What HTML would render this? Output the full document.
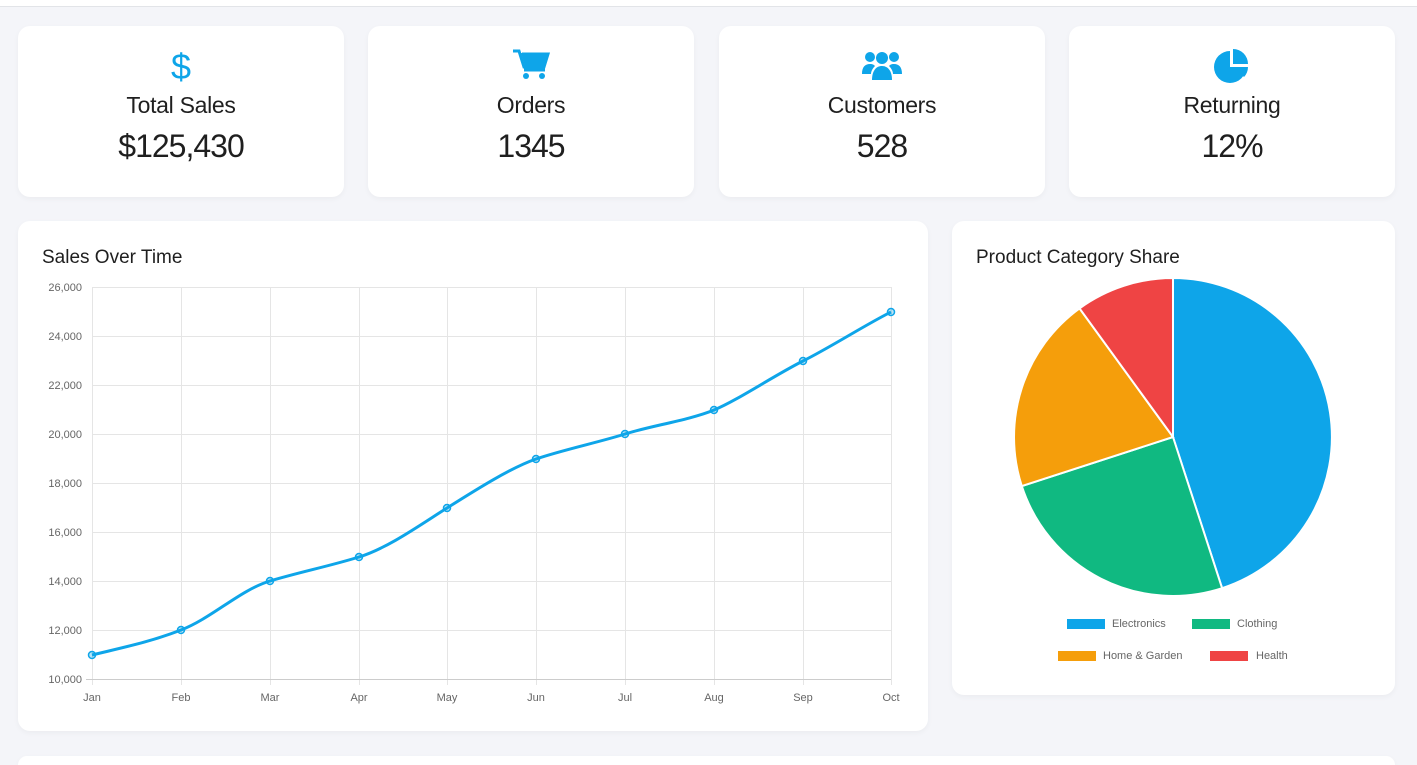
<!DOCTYPE html>
<html><head><meta charset="utf-8"><style>
*{box-sizing:border-box;margin:0;padding:0}
html,body{width:1417px;height:765px;overflow:hidden}
body{background:#f4f5f9;font-family:"Liberation Sans",sans-serif;position:relative;color:#222}
.top{position:absolute;left:0;top:0;width:1417px;height:7px;background:#fff;border-bottom:1px solid #e2e4e8}
.card{position:absolute;background:#fff;border-radius:12px;box-shadow:0 2px 6px rgba(0,0,0,.04)}
.stat{top:26px;height:171px;width:326px;text-align:center}
.stat svg{position:absolute;left:50%;top:22px;transform:translateX(-50%)}
.stat .t{position:absolute;left:0;right:0;top:66px;font-size:23px;color:#1f1f1f;letter-spacing:-0.3px}
.stat .v{position:absolute;left:0;right:0;top:102px;font-size:32px;letter-spacing:-1px;color:#1f1f1f}
h3{position:absolute;font-size:19px;font-weight:normal;left:24px;top:26px;color:#1f1f1f}
.ax{font-size:11px;fill:#666;font-family:"Liberation Sans",sans-serif}
</style></head><body>
<div class="top"></div>
<div class="card stat" style="left:18px"><svg width="24" height="36" viewBox="0 0 24 36"><text x="12" y="31" text-anchor="middle" font-size="36" fill="#0ea5e9" font-family="Liberation Sans">$</text></svg><div class="t">Total Sales</div><div class="v">$125,430</div></div>
<div class="card stat" style="left:368px"><svg width="38" height="32" viewBox="0 0 38 32"><path d="M1 3h6l5 16h20l4-13H10" fill="none" stroke="#0ea5e9" stroke-width="3"/><path d="M9 5h27l-4 13H13z" fill="#0ea5e9"/><path d="M12 22h21" stroke="#0ea5e9" stroke-width="3"/><circle cx="14" cy="28" r="3" fill="#0ea5e9"/><circle cx="30" cy="28" r="3" fill="#0ea5e9"/></svg><div class="t">Orders</div><div class="v">1345</div></div>
<div class="card stat" style="left:719px"><svg width="42" height="34" viewBox="0 0 42 34"><circle cx="21" cy="10" r="6" fill="#0ea5e9"/><circle cx="9" cy="9" r="5" fill="#0ea5e9"/><circle cx="33" cy="9" r="5" fill="#0ea5e9"/><path d="M11 32c0-9 4-14 10-14s10 5 10 14z" fill="#0ea5e9"/><path d="M1 26c0-7 3-10 8-10 3 0 4 1 5 2-3 3-4 6-4 8z" fill="#0ea5e9"/><path d="M41 26c0-7-3-10-8-10-3 0-4 1-5 2 3 3 4 6 4 8z" fill="#0ea5e9"/></svg><div class="t">Customers</div><div class="v">528</div></div>
<div class="card stat" style="left:1069px"><svg width="36" height="36" viewBox="0 0 36 36"><path d="M16 3A16 16 0 1 0 32 19H16z" fill="#0ea5e9"/><path d="M19 1v15h15A15 15 0 0 0 19 1z" fill="#0ea5e9"/><path d="M20 19h14a15 15 0 0 1-4 10z" fill="#0ea5e9"/></svg><div class="t">Returning</div><div class="v">12%</div></div>

<div class="card" style="left:18px;top:221px;width:910px;height:510px"><h3>Sales Over Time</h3></div>
<div class="card" style="left:952px;top:221px;width:443px;height:474px"><h3>Product Category Share</h3></div>
<div class="card" style="left:18px;top:756px;width:1377px;height:9px;border-radius:12px 12px 0 0"></div>

<svg style="position:absolute;left:0;top:0" width="1417" height="765">
<g stroke="#e5e5e5" stroke-width="1">
<line x1="92" y1="287.5" x2="891" y2="287.5"/><line x1="92" y1="336.5" x2="891" y2="336.5"/><line x1="92" y1="385.5" x2="891" y2="385.5"/><line x1="92" y1="434.5" x2="891" y2="434.5"/><line x1="92" y1="483.5" x2="891" y2="483.5"/><line x1="92" y1="532.5" x2="891" y2="532.5"/><line x1="92" y1="581.5" x2="891" y2="581.5"/><line x1="92" y1="630.5" x2="891" y2="630.5"/>
<line x1="92.5" y1="287" x2="92.5" y2="685"/><line x1="181.5" y1="287" x2="181.5" y2="685"/><line x1="270.5" y1="287" x2="270.5" y2="685"/><line x1="359.5" y1="287" x2="359.5" y2="685"/><line x1="447.5" y1="287" x2="447.5" y2="685"/><line x1="536.5" y1="287" x2="536.5" y2="685"/><line x1="625.5" y1="287" x2="625.5" y2="685"/><line x1="714.5" y1="287" x2="714.5" y2="685"/><line x1="803.5" y1="287" x2="803.5" y2="685"/><line x1="891.5" y1="287" x2="891.5" y2="685"/>
<line x1="86" y1="679.5" x2="891" y2="679.5" stroke="#ccc"/>
</g>
<g class="ax" text-anchor="end">
<text x="82" y="291">26,000</text><text x="82" y="340">24,000</text><text x="82" y="389">22,000</text><text x="82" y="438">20,000</text><text x="82" y="487">18,000</text><text x="82" y="536">16,000</text><text x="82" y="585">14,000</text><text x="82" y="634">12,000</text><text x="82" y="683">10,000</text>
</g>
<g class="ax" text-anchor="middle">
<text x="92" y="701">Jan</text><text x="181" y="701">Feb</text><text x="270" y="701">Mar</text><text x="359" y="701">Apr</text><text x="447" y="701">May</text><text x="536" y="701">Jun</text><text x="625" y="701">Jul</text><text x="714" y="701">Aug</text><text x="803" y="701">Sep</text><text x="891" y="701">Oct</text>
</g>
<path d="M92 655 C125 647,150 642,181 630 S240 590,270 581 S330 566,359 557 S420 525,447 508 S510 468,536 459 S600 442,625 434 S690 420,714 410 S775 375,803 361 S865 325,891 312" fill="none" stroke="#0ea5e9" stroke-width="3"/>
<g fill="rgba(14,165,233,.3)" stroke="#0ea5e9" stroke-width="1.5">
<circle cx="92" cy="655" r="3.5"/><circle cx="181" cy="630" r="3.5"/><circle cx="270" cy="581" r="3.5"/><circle cx="359" cy="557" r="3.5"/><circle cx="447" cy="508" r="3.5"/><circle cx="536" cy="459" r="3.5"/><circle cx="625" cy="434" r="3.5"/><circle cx="714" cy="410" r="3.5"/><circle cx="803" cy="361" r="3.5"/><circle cx="891" cy="312" r="3.5"/>
</g>
<g stroke="#fff" stroke-width="2">
<path d="M1173 437V278A159 159 0 0 1 1222.1 588.2z" fill="#0ea5e9"/>
<path d="M1173 437L1222.1 588.2A159 159 0 0 1 1021.8 486.1z" fill="#10b981"/>
<path d="M1173 437L1021.8 486.1A159 159 0 0 1 1079.5 308.4z" fill="#f59e0b"/>
<path d="M1173 437L1079.5 308.4A159 159 0 0 1 1173 278z" fill="#ef4444"/>
</g>
<rect x="1067" y="619" width="38" height="10" fill="#0ea5e9"/><text class="ax" x="1112" y="627">Electronics</text>
<rect x="1192" y="619" width="38" height="10" fill="#10b981"/><text class="ax" x="1237" y="627">Clothing</text>
<rect x="1058" y="651" width="38" height="10" fill="#f59e0b"/><text class="ax" x="1103" y="659">Home &amp; Garden</text>
<rect x="1210" y="651" width="38" height="10" fill="#ef4444"/><text class="ax" x="1256" y="659">Health</text>
</svg>
</body></html>
